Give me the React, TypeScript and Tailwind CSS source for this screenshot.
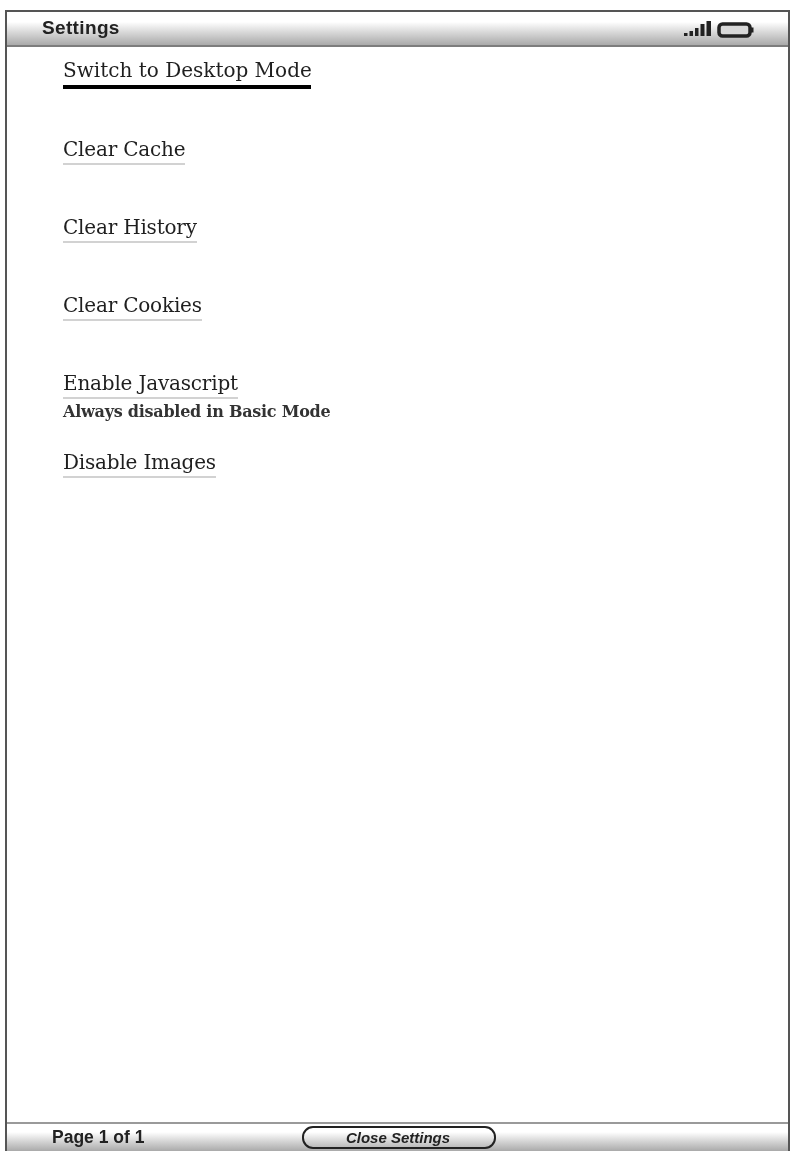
export default function App() {
  const items = ["Clear Cache", "Clear History", "Clear Cookies"];
  const serif = "font-['DejaVu_Serif',serif] text-[20px] leading-[28px] tracking-[-0.2px] text-[#1f1f1f]";
  return (
    <div className="h-[1151px] w-[793px] overflow-hidden bg-white pl-[5px] pr-[3px] pt-[10px] blur-[0.6px]">
      <div className="flex h-full flex-col border-x-2 border-t-2 border-[#555]">
        <header className="flex h-[35px] shrink-0 items-center justify-between border-b-2 border-[#7d7d7d] bg-gradient-to-b from-white from-30% to-[#aaaaaa] pl-[35px] pr-[34px]">
          <span className="font-['Liberation_Sans',sans-serif] text-[19px] font-bold tracking-[0.35px] text-[#222]">Settings</span>
          <svg width="70" height="18" viewBox="0 0 70 18" aria-hidden="true">
            <g fill="#222">
              <rect x="0" y="13" width="3.5" height="3" />
              <rect x="5.5" y="11" width="3.5" height="5" />
              <rect x="11" y="8" width="3.5" height="8" />
              <rect x="16.5" y="4" width="4" height="12" />
              <rect x="22.5" y="1" width="4.5" height="15" />
            </g>
            <rect x="35" y="4" width="31" height="12" rx="3.5" fill="#d8d8d8" stroke="#222" strokeWidth="3.5" />
            <rect x="67" y="7.5" width="2.5" height="5" fill="#222" />
          </svg>
        </header>
        <main className={`flex min-h-0 flex-1 flex-col items-start pl-[56px] pt-[9px] ${serif}`}>
          <div className="mb-[46px] w-[248px] border-b-4 border-black pb-[1px] tracking-normal whitespace-nowrap">Switch to Desktop Mode</div>
          {items.map((t) => (
            <div key={t} className="mb-[48px] border-b-2 border-[#d2d2d2] whitespace-nowrap">{t}</div>
          ))}
          <div className="border-b-2 border-[#d2d2d2] whitespace-nowrap">Enable Javascript</div>
          <div className="mt-[1px] text-[16px] font-bold leading-[24px] tracking-[-0.25px] whitespace-nowrap text-[#333]">Always disabled in Basic Mode</div>
          <div className="mt-[24px] border-b-2 border-[#d2d2d2] whitespace-nowrap">Disable Images</div>
        </main>
        <footer className="flex h-[29px] shrink-0 items-center border-t-2 border-[#9a9a9a] bg-gradient-to-b from-white from-30% to-[#aaaaaa] pl-[45px]">
          <span className="w-[250px] font-['Liberation_Sans',sans-serif] text-[17.5px] font-bold text-[#222]">Page 1 of 1</span>
          <button className="h-[23px] w-[194px] rounded-[11px] border-2 border-[#222] bg-transparent pr-[2px] font-['Liberation_Sans',sans-serif] text-[15px] font-bold italic leading-[18px] text-[#222]">Close Settings</button>
        </footer>
      </div>
    </div>
  );
}
